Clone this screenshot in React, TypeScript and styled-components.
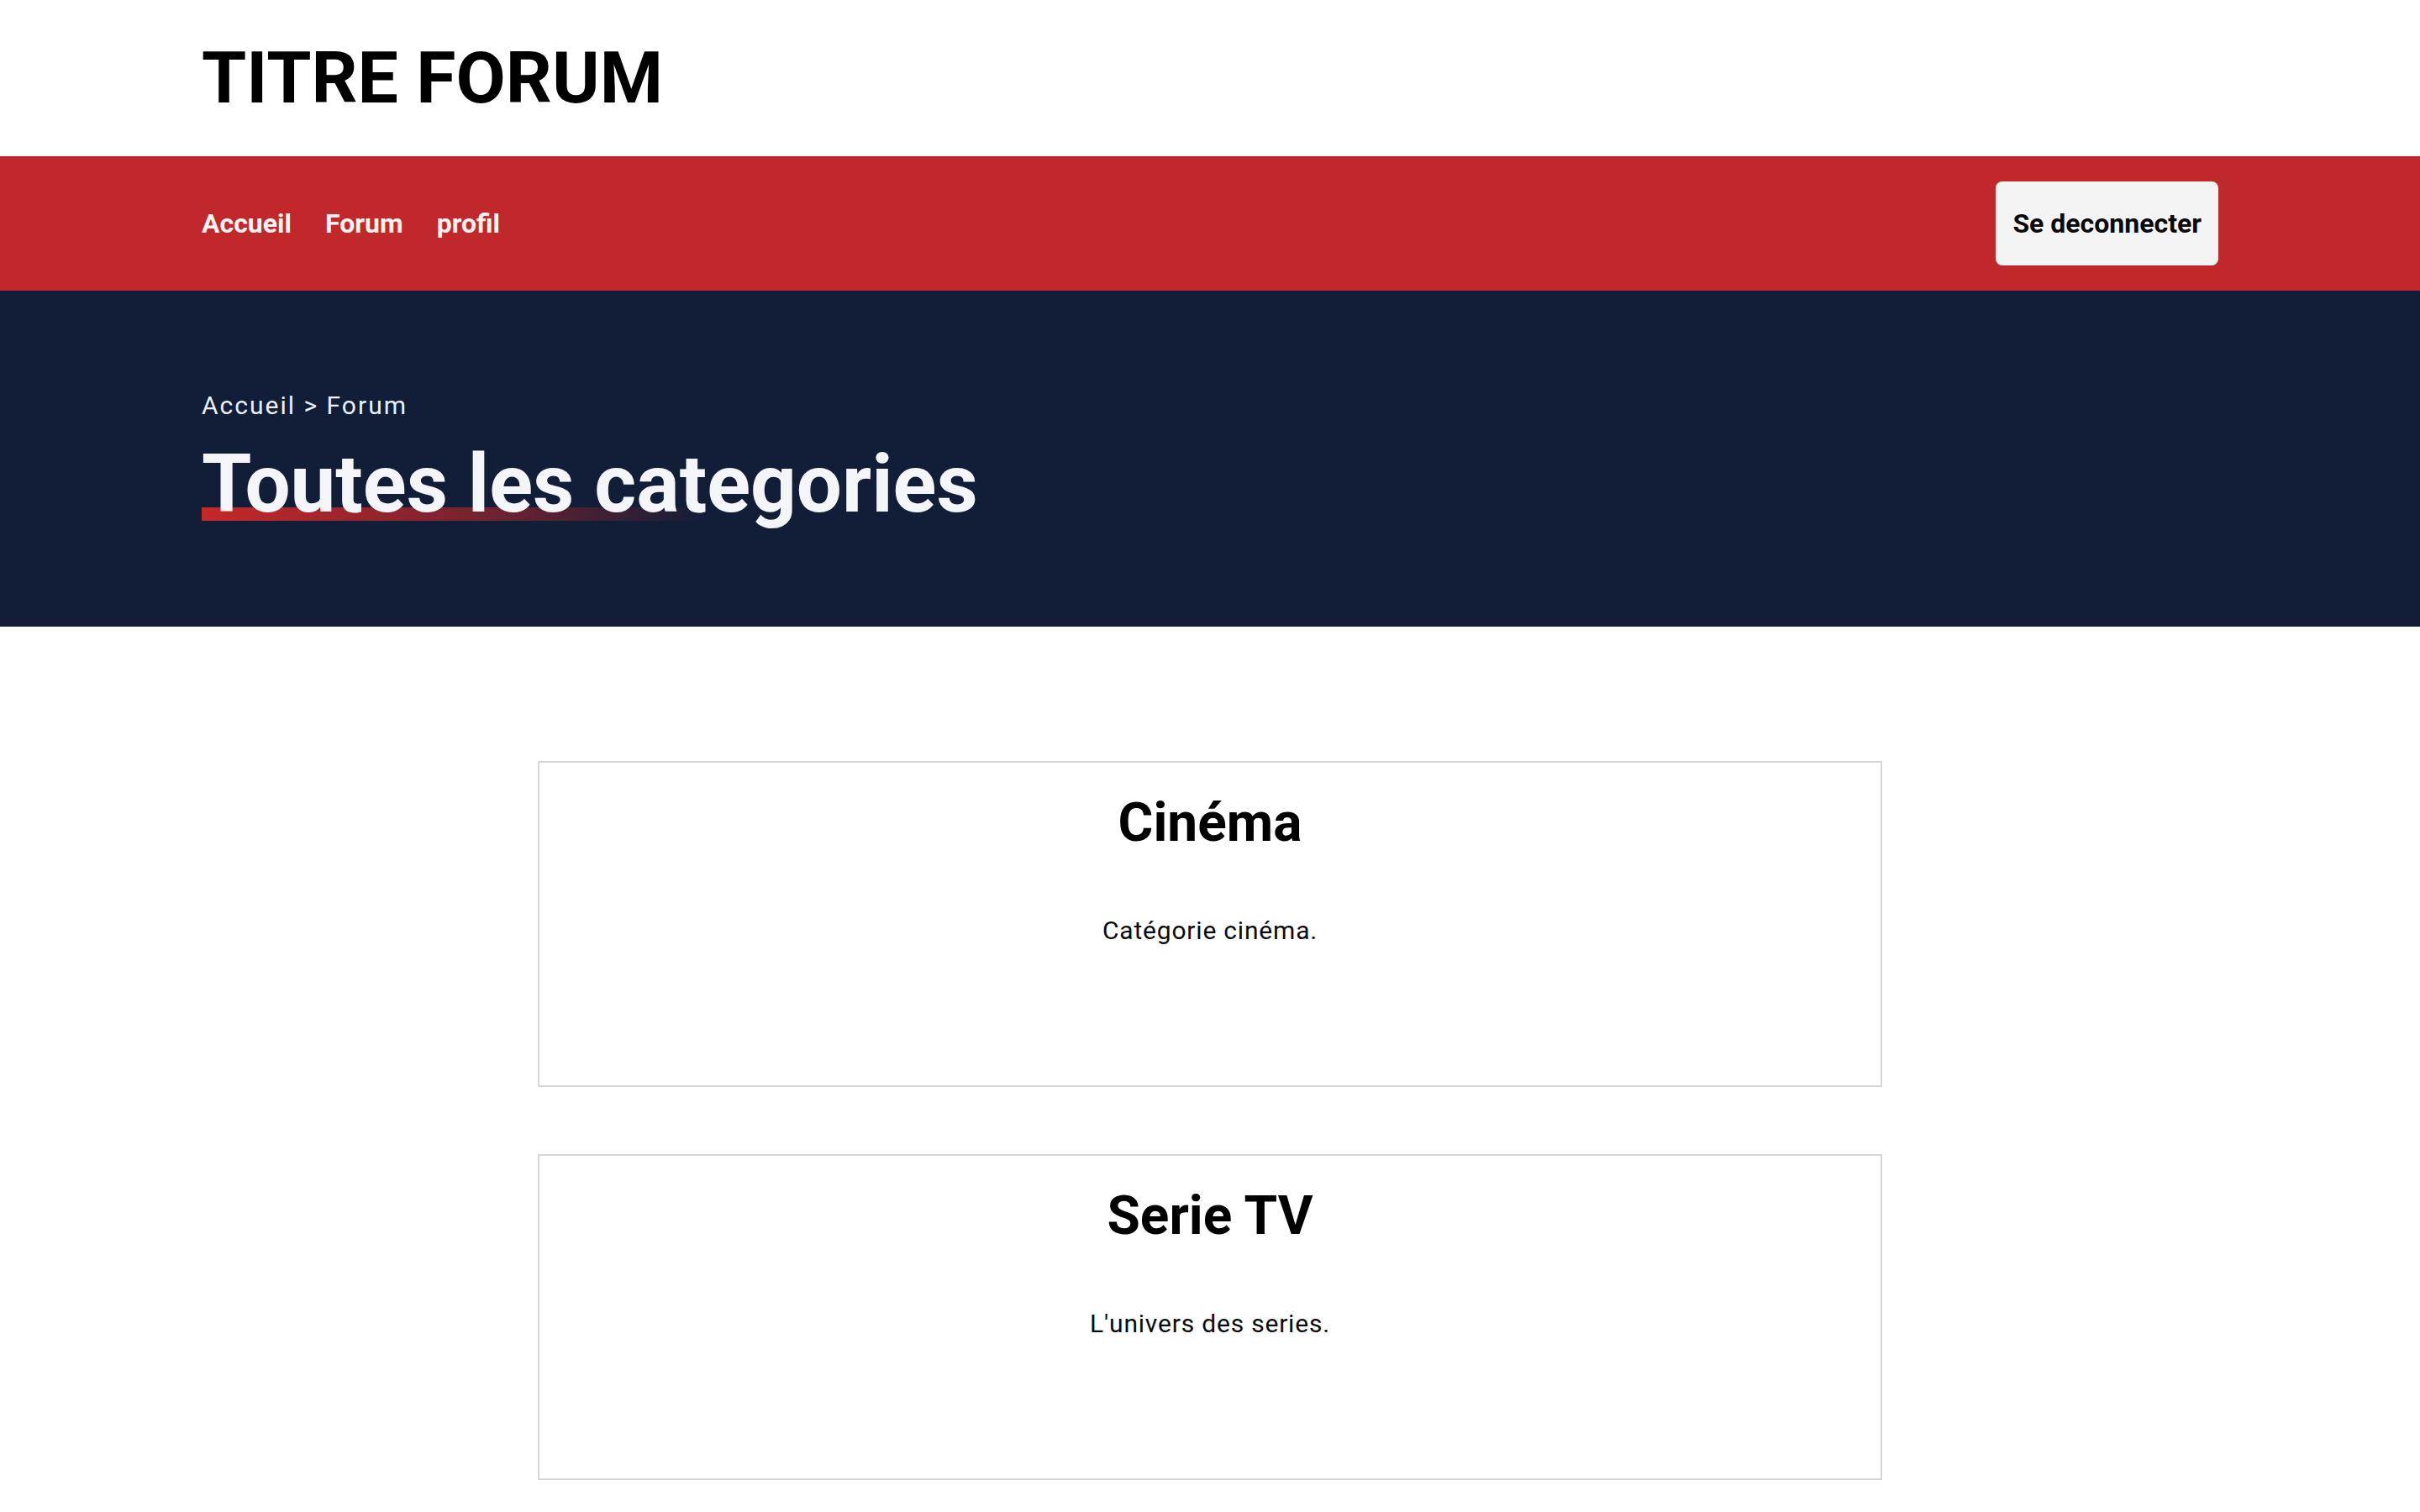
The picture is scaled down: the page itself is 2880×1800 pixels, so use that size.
import React from "react";
import styled, { createGlobalStyle } from "styled-components";

const GlobalStyle = createGlobalStyle`
  html, body {
    margin: 0;
    padding: 0;
    background: #ffffff;
    font-family: Roboto, "Noto Sans", "Liberation Sans", sans-serif;
  }
  * { box-sizing: border-box; }
`;

const Header = styled.header`
  background: #ffffff;
  padding: 42px 240px 43px;
`;

const SiteTitle = styled.h1`
  margin: 0;
  font-size: 86px;
  font-weight: 700;
  line-height: normal;
  color: #000000;
`;

const NavBar = styled.nav`
  height: 160px;
  background: #c1282b;
  padding: 0 240px;
  display: flex;
  align-items: center;
  justify-content: space-between;
`;

const NavLinks = styled.div`
  display: flex;
  align-items: center;
  gap: 40px;
`;

const NavLink = styled.a`
  font-size: 32px;
  font-weight: 700;
  color: #fdf2f2;
  text-decoration: none;
  cursor: pointer;
`;

const LogoutButton = styled.button`
  height: 100px;
  padding: 0 20px;
  border: none;
  border-radius: 8px;
  background: #f4f4f5;
  color: #0a0a0a;
  font-family: inherit;
  font-size: 32px;
  font-weight: 700;
  cursor: pointer;
`;

const Hero = styled.section`
  height: 400px;
  background: #121d38;
  padding: 119px 240px 0;
`;

const Breadcrumb = styled.div`
  font-size: 30px;
  letter-spacing: 2px;
  line-height: normal;
  color: #eaf1fb;
`;

const PageHeading = styled.h2`
  display: inline-block;
  margin: 20px 0 0;
  font-size: 96px;
  font-weight: 700;
  line-height: normal;
  color: #f3f5f8;
  background-image: linear-gradient(90deg, #c62828 0%, rgba(198, 40, 40, 0.55) 55%, rgba(198, 40, 40, 0) 100%);
  background-repeat: no-repeat;
  background-size: 600px 16px;
  background-position: 0 84px;
`;

const Main = styled.main`
  padding: 160px 0 160px;
  display: flex;
  flex-direction: column;
  align-items: center;
  gap: 80px;
`;

const Card = styled.article`
  width: 1600px;
  height: 388px;
  border: 2px solid #d6d6d6;
  padding-top: 34px;
  text-align: center;
  background: #ffffff;
`;

const CardTitle = styled.h3`
  margin: 0;
  font-size: 64px;
  font-weight: 700;
  line-height: normal;
  color: #000000;
`;

const CardText = styled.p`
  margin: 73px 0 0;
  font-size: 30px;
  letter-spacing: 0.8px;
  line-height: normal;
  color: #0a0a0a;
`;

const categories = [
  { title: "Cinéma", text: "Catégorie cinéma." },
  { title: "Serie TV", text: "L'univers des series." },
];

export default function App() {
  return (
    <>
      <GlobalStyle />
      <Header>
        <SiteTitle>TITRE FORUM</SiteTitle>
      </Header>
      <NavBar>
        <NavLinks>
          <NavLink>Accueil</NavLink>
          <NavLink>Forum</NavLink>
          <NavLink>profil</NavLink>
        </NavLinks>
        <LogoutButton>Se deconnecter</LogoutButton>
      </NavBar>
      <Hero>
        <Breadcrumb>Accueil &gt; Forum</Breadcrumb>
        <PageHeading>Toutes les categories</PageHeading>
      </Hero>
      <Main>
        {categories.map((c) => (
          <Card key={c.title}>
            <CardTitle>{c.title}</CardTitle>
            <CardText>{c.text}</CardText>
          </Card>
        ))}
      </Main>
    </>
  );
}
